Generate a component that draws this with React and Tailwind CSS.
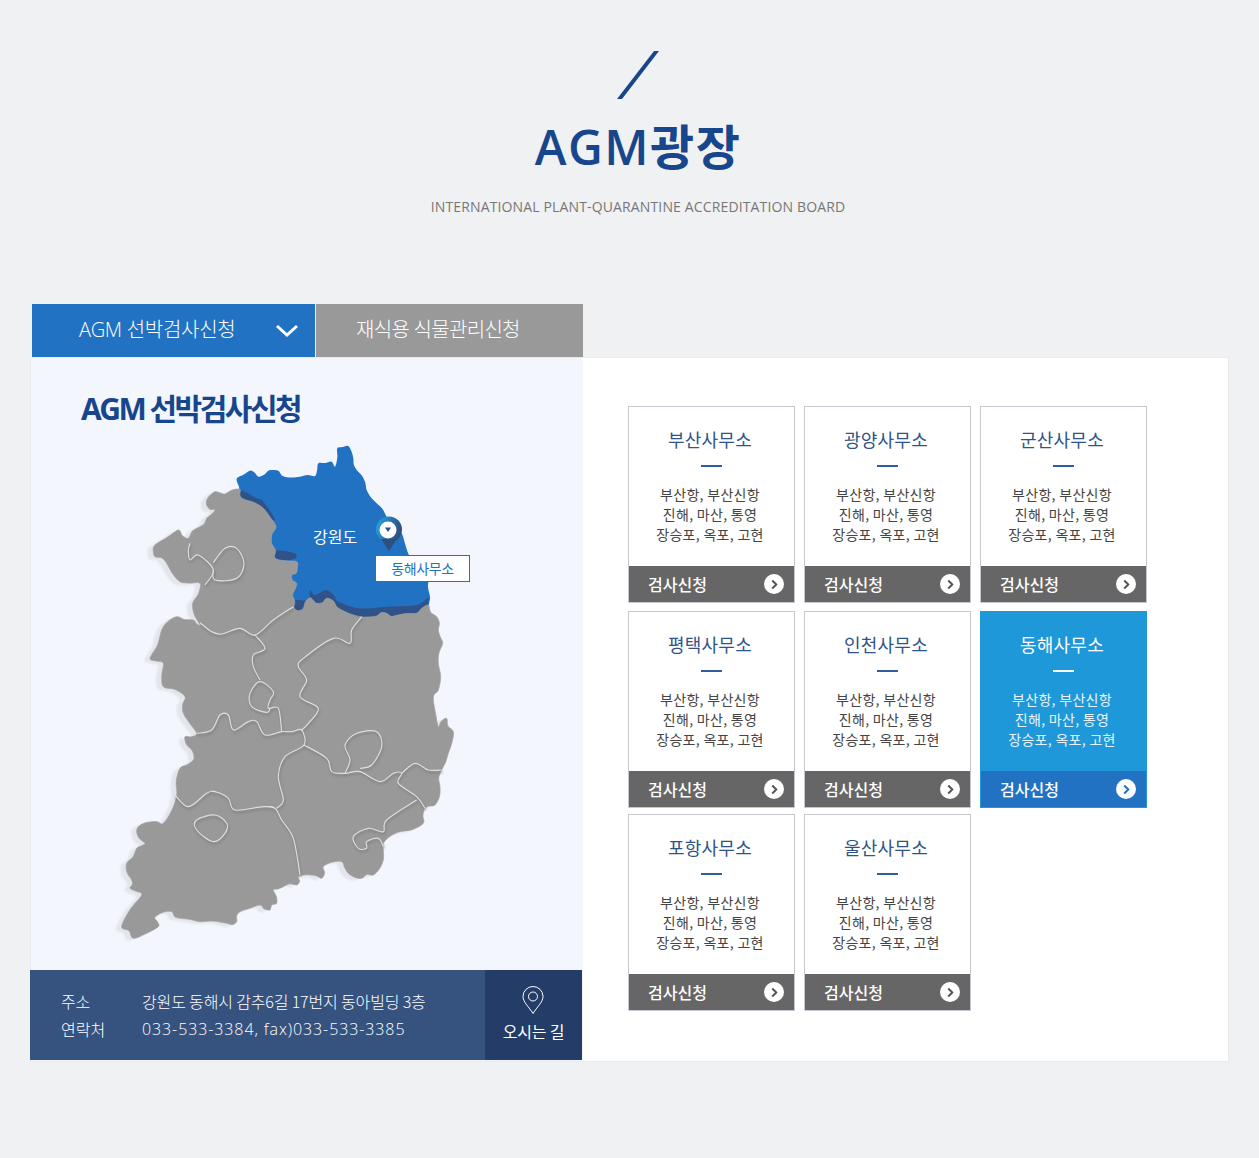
import { useMemo } from 'react';

const FONT = { fontFamily: '"Open Sans", "Noto Sans CJK KR", sans-serif' };
const KR = { fontFamily: '"Noto Sans CJK KR", sans-serif' };

const offices = [
  { name: '부산사무소' },
  { name: '광양사무소' },
  { name: '군산사무소' },
  { name: '평택사무소' },
  { name: '인천사무소' },
  { name: '동해사무소', active: true },
  { name: '포항사무소' },
  { name: '울산사무소' },
];

// map points are in 3x page units (viewBox 1140x1560)
const smooth = (pts, closed = false) => {
  const n = pts.length;
  const at = (i) => (closed ? pts[(i + n) % n] : pts[Math.max(0, Math.min(n - 1, i))]);
  let d = `M${pts[0][0]},${pts[0][1]}`;
  const last = closed ? n : n - 1;
  for (let i = 0; i < last; i++) {
    const [p0, p1, p2, p3] = [at(i - 1), at(i), at(i + 1), at(i + 2)];
    const c1 = [p1[0] + (p2[0] - p0[0]) / 6, p1[1] + (p2[1] - p0[1]) / 6];
    const c2 = [p2[0] - (p3[0] - p1[0]) / 6, p2[1] - (p3[1] - p1[1]) / 6];
    d += `C${c1[0].toFixed(1)},${c1[1].toFixed(1)} ${c2[0].toFixed(1)},${c2[1].toFixed(1)} ${p2[0]},${p2[1]}`;
  }
  return closed ? d + 'Z' : d;
};

// roughen a coastline a little: midpoint pushed off the segment
const wobble = (pts, amp) => {
  const out = [];
  pts.forEach((p, i) => {
    const q = pts[(i + 1) % pts.length];
    out.push(p);
    const len = Math.hypot(q[0] - p[0], q[1] - p[1]);
    if (len > 24) {
      const s = Math.sin(i * 2.3) * amp;
      out.push([
        +((p[0] + q[0]) / 2 + ((q[1] - p[1]) / len) * s).toFixed(1),
        +((p[1] + q[1]) / 2 - ((q[0] - p[0]) / len) * s).toFixed(1),
      ]);
    }
  });
  return out;
};

const land = [
  [345,185],[375,192],[420,178],[432,208],[490,235],[528,290],[515,340],[525,385],[590,395],[592,415],[575,435],[590,460],[578,495],[582,535],[610,535],[630,503],[650,520],[680,505],[712,532],[780,560],[830,558],[860,550],[890,556],[950,550],[985,525],[1010,560],[1015,600],[1028,640],[1015,700],[1015,780],[1000,810],[1015,890],[1040,865],[1060,905],[1045,970],[1025,1020],[1020,1070],[1005,1125],[975,1135],[970,1180],[900,1205],[850,1240],[850,1290],[820,1335],[785,1345],[745,1330],[725,1295],[670,1310],[665,1345],[630,1335],[595,1340],[590,1365],[550,1370],[520,1380],[530,1420],[510,1440],[480,1425],[420,1445],[410,1475],[380,1480],[300,1475],[240,1465],[215,1445],[165,1462],[175,1490],[100,1525],[65,1490],[125,1395],[90,1375],[95,1350],[80,1300],[110,1255],[135,1240],[110,1205],[115,1190],[155,1175],[190,1180],[230,1095],[240,1015],[280,990],[275,960],[255,920],[290,910],[250,850],[255,800],[190,770],[190,700],[150,685],[185,600],[230,560],[280,570],[300,585],[278,520],[300,460],[240,455],[200,400],[165,380],[165,345],[235,300],[265,325],[300,290],[320,265],[345,240],[320,225],[320,210],
];

const gangwon = [
  [410,147],[450,122],[475,140],[505,122],[535,122],[548,138],[600,140],[645,138],[655,100],[695,95],[705,110],[712,55],[745,48],[760,85],[770,120],[795,155],[800,180],[830,220],[860,260],[905,310],[930,380],[985,440],[990,500],[984,530],[950,560],[640,560],[570,500],[420,200],
];

const bands = [
  [[582,512],[625,510],[630,480],[645,495],[680,480],[705,500],[715,515],[780,535],[860,530],[950,525],[984,503],[978,535],[940,565],[640,565],[590,545]],
  [[420,180],[470,205],[490,215],[525,268],[500,260],[420,215]],
  [[525,362],[585,370],[580,388],[525,388]],
];

const borders = [
  [[300,578],[335,605],[365,612],[420,595],[465,615],[520,570],[580,530]],
  [[465,615],[495,655],[460,675],[460,710],[480,750]],
  [[785,560],[755,600],[750,640],[700,625],[610,685],[595,710],[620,750],[600,800],[655,835],[625,880],[605,900]],
  [[270,340],[265,360],[270,390],[295,375],[340,420],[315,465]],
  [[340,398],[375,355],[410,355],[432,400],[410,445],[345,450],[340,420]],
  [[290,910],[335,900],[360,855],[385,855],[400,900],[445,875],[470,875],[495,915],[545,905],[575,905],[605,900],[612,945],[555,980],[535,1040],[550,1110],[530,1135]],
  [[545,905],[535,835],[505,835],[510,810],[520,785],[480,755],[450,790],[455,830],[500,847],[510,835]],
  [[225,1095],[265,1130],[320,1090],[345,1085],[385,1105],[405,1140],[490,1130],[525,1135],[545,1170],[580,1225],[600,1335]],
  [[612,945],[680,985],[695,1025],[735,1030],[780,1025],[840,1055],[880,1030],[905,1030],[895,1060],[950,1100],[975,1135]],
  [[735,1030],[750,990],[735,945],[770,910],[830,905],[845,950],[815,1005],[780,1015]],
  [[905,1030],[945,1000],[985,1020],[1025,1020]],
  [[950,1110],[860,1170],[850,1205],[805,1195],[760,1220],[775,1255],[800,1255],[800,1235],[835,1225],[850,1250]],
];

const gwangju = [[290,1170],[345,1155],[380,1180],[375,1210],[340,1235],[290,1200]];

function KoreaMap() {
  const landPath = useMemo(() => smooth(wobble(land, 7), true), []);
  const gangwonPath = useMemo(() => smooth(wobble(gangwon, 4), true), []);
  const lines = useMemo(() => borders.map((b) => smooth(b)), []);
  const loop = useMemo(() => smooth(gwangju, true), []);
  return (
    <svg viewBox="0 0 1140 1560" className="block h-[520px] w-[380px]">
      <defs>
        <filter id="soft" x="-10%" y="-10%" width="120%" height="120%">
          <feGaussianBlur stdDeviation="3.500" />
        </filter>
        <filter id="lineShadow" x="-20%" y="-20%" width="140%" height="140%">
          <feGaussianBlur stdDeviation="3" />
        </filter>
      </defs>
      <path d={landPath} fill="#e2e5eb" transform="translate(-17,7)" filter="url(#soft)" />
      <path d={gangwonPath} fill="#2272c3" />
      {bands.map((b, i) => (
        <path key={i} d={smooth(b, true)} fill="#2f5388" />
      ))}
      <path d={landPath} fill="#999999" stroke="#a3a3a3" strokeWidth="2" />
      {[...lines, loop].map((d, i) => (
        <path key={i} d={d} fill="none" stroke="#7a7a7a" strokeWidth="7" opacity="0.55" transform="translate(2,6)" filter="url(#lineShadow)" />
      ))}
      {[...lines, loop].map((d, i) => (
        <path key={i} d={d} fill="none" stroke="#dedede" strokeWidth="3.500" />
      ))}
    </svg>
  );
}

function MapMarker() {
  return (
    <svg viewBox="0 0 28 36" className="absolute left-[275px] top-[86px] h-[36px] w-[28px]">
      <defs>
        <linearGradient id="pinGrad" x1="0" y1="0" x2="1" y2="0.300">
          <stop offset="0" stopColor="#22a9e4" />
          <stop offset="1" stopColor="#2f4f80" />
        </linearGradient>
      </defs>
      <circle cx="14" cy="13.500" r="13" fill="url(#pinGrad)" />
      <path d="M6 23l8 12 8-12z" fill="#2f4f80" />
      <circle cx="13" cy="14" r="8.500" fill="#fff" />
      <path d="M10 11.500h6l-3 4.500z" fill="#1d4f96" />
    </svg>
  );
}

function OfficeCard({ name, active }) {
  return (
    <div className={`flex h-[197px] flex-col border ${active ? 'border-[#1e98d9] bg-[#1e98d9]' : 'border-[#c4c9d1] bg-white'}`} style={KR}>
      <div className={`pr-[3px] pt-[19px] text-center text-[18px] leading-[26px] tracking-[0.2px] ${active ? 'text-white' : 'text-[#2f5488]'}`}>{name}</div>
      <div className={`mx-auto mt-[13px] h-[2px] w-[21px] ${active ? 'bg-white' : 'bg-[#2f5f96]'}`}></div>
      <div className={`mt-[17px] pr-[3px] text-center text-[14px] leading-[20px] tracking-[0.3px] ${active ? 'text-[#e8f4fb]' : 'text-[#444]'}`}>
        <p>부산항, 부산신항</p>
        <p>진해, 마산, 통영</p>
        <p>장승포, 옥포, 고현</p>
      </div>
      <div className={`mt-auto flex h-[36px] items-center justify-between pl-[19px] pr-[10px] text-[16px] font-medium text-white ${active ? 'bg-[#2272c3]' : 'bg-[#666666]'}`}>
        <span className="pb-[1px]">검사신청</span>
        <span className="flex h-[20px] w-[20px] items-center justify-center rounded-full bg-white">
          <svg viewBox="0 0 10 12" className="h-[11px] w-[9px]">
            <path d="M2.500 1.500 7 6l-4.500 4.500" fill="none" stroke={active ? '#2272c3' : '#555'} strokeWidth="2.200" />
          </svg>
        </span>
      </div>
    </div>
  );
}

export default function App() {
  return (
    <div className="min-h-[1158px] bg-[#f0f1f3] pb-[96px]" style={FONT}>
      <header className="flex h-[304px] flex-col items-center pl-[17px] pt-[51px]">
        <svg viewBox="0 0 42 48" className="h-[48px] w-[42px] shrink-0">
          <path d="M37 0h5L5 48H0z" fill="#17468c" />
        </svg>
        <h1 className="mt-[18px] text-[48px] font-semibold leading-[60px] tracking-[1.5px] text-[#17468c]">AGM광장</h1>
        <p className="mt-[20px] text-[14px] leading-[20px] tracking-[0.14px] text-[#777777]">
          INTERNATIONAL PLANT-QUARANTINE ACCREDITATION BOARD
        </p>
      </header>

      <div className="ml-[32px] flex h-[53px] text-[20px] font-light text-white">
        <div className="flex w-[283px] items-center justify-between bg-[#2272c3] pl-[47px] pr-[16px]">
          <span className="pb-[2px] tracking-[-0.3px]">AGM 선박검사신청</span>
          <svg viewBox="0 0 24 14" className="h-[14px] w-[24px]">
            <path d="M2 2l10 9 10-9" fill="none" stroke="#fff" strokeWidth="3" />
          </svg>
        </div>
        <div className="ml-px flex w-[267px] items-center bg-[#999999] pb-[2px] pl-[40px] tracking-[-0.7px]">재식용 식물관리신청</div>
      </div>

      <div className="ml-[30px] flex h-[705px] w-[1199px] border border-[#e8eaee] bg-white">
        <div className="flex w-[552px] flex-col bg-[#f3f6fc]">
          <h2 className="pl-[50px] pt-[33px] text-[30px] font-bold leading-[36px] tracking-[-2.5px] text-[#17468c]">AGM 선박검사신청</h2>
          <div className="relative ml-[69px] mt-[3px]">
            <KoreaMap />
            <span className="absolute left-[213px] top-[94px] text-[16px] leading-[24px] text-white" style={KR}>강원도</span>
            <MapMarker />
            <div className="absolute left-[275px] top-[125px] flex h-[27px] w-[95px] items-center justify-center border border-[#2272c3] bg-white pb-[1px] text-[14px] tracking-[-0.4px] text-[#2272c3]" style={KR}>
              동해사무소
            </div>
          </div>
          <div className="-ml-px mt-[20px] flex h-[90px] w-[552px] bg-[#36537f] text-white">
            <div className="flex-1 pl-[31px] pt-[17px] text-[16px] font-light leading-[28px]">
              <div className="flex tracking-[-0.15px]" style={KR}>
                <span className="w-[81px]">주소</span>
                <span>강원도 동해시 감추6길 17번지 동아빌딩 3층</span>
              </div>
              <div className="flex">
                <span className="w-[81px]" style={KR}>연락처</span>
                <span className="tracking-[0.9px]">033-533-3384, fax)033-533-3385</span>
              </div>
            </div>
            <div className="flex w-[97px] flex-col items-center bg-[#243d68] pt-[16px]" style={KR}>
              <svg viewBox="0 0 22 28" className="mr-[1px] h-[28px] w-[22px]" fill="none" stroke="#fff" strokeWidth="1">
                <path d="M11 27.500C7 21 1 16 1 10.500a10 10 0 0 1 20 0C21 16 15 21 11 27.500Z" />
                <circle cx="11" cy="10.500" r="4.500" />
              </svg>
              <span className="mt-[5px] text-[16px] leading-[24px] tracking-[-0.2px]">오시는 길</span>
            </div>
          </div>
        </div>
        <div className="pl-[45px] pt-[48px]">
          <div className="grid grid-cols-[167px_167px_167px] grid-rows-[205px_203px_197px] gap-x-[9px]">
            {offices.map((o) => (
              <OfficeCard key={o.name} name={o.name} active={o.active} />
            ))}
          </div>
        </div>
      </div>
    </div>
  );
}
